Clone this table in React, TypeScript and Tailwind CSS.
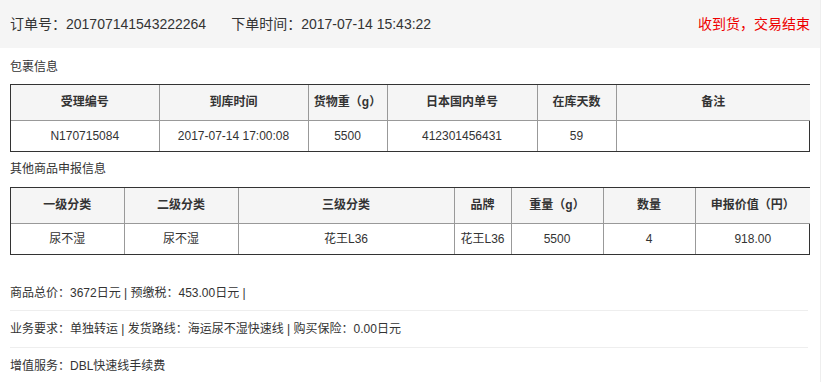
import React from 'react';

const font = { fontFamily: '"Liberation Sans", "Noto Sans CJK SC", sans-serif' };

type Col = { label: string; width: number };

const parcelCols: Col[] = [
  { label: '受理编号', width: 148 },
  { label: '到库时间', width: 149 },
  { label: '货物重（g）', width: 79 },
  { label: '日本国内单号', width: 150 },
  { label: '在库天数', width: 79 },
  { label: '备注', width: 194 },
];

const parcelRow = ['N170715084', '2017-07-14 17:00:08', '5500', '412301456431', '59', ''];

const goodsCols: Col[] = [
  { label: '一级分类', width: 113 },
  { label: '二级分类', width: 114 },
  { label: '三级分类', width: 216 },
  { label: '品牌', width: 57 },
  { label: '重量（g）', width: 92 },
  { label: '数量', width: 92 },
  { label: '申报价值（円）', width: 115 },
];

const goodsRow = ['尿不湿', '尿不湿', '花王L36', '花王L36', '5500', '4', '918.00'];

function InfoTable({ cols, row }: { cols: Col[]; row: string[] }) {
  return (
    <div className="w-[800px] border border-[#333]">
      <table className="w-full table-fixed border-collapse border-hidden text-[12px] text-[#333]">
        <colgroup>
          {cols.map((c) => (
            <col key={c.label} style={{ width: c.width }} />
          ))}
        </colgroup>
        <thead>
          <tr className="h-[35px] bg-[#f5f5f5]">
            {cols.map((c) => (
              <th key={c.label} className="border border-[#999] font-bold text-center px-1 whitespace-nowrap">
                {c.label}
              </th>
            ))}
          </tr>
        </thead>
        <tbody>
          <tr className="h-[31px]">
            {row.map((v, i) => (
              <td key={i} className="border border-[#999] text-center px-1 whitespace-nowrap">
                {v}
              </td>
            ))}
          </tr>
        </tbody>
      </table>
    </div>
  );
}

export default function App() {
  return (
    <div className="w-[831px] h-[382px] bg-white overflow-hidden flex" style={font}>
      <div className="w-[821px] border-r border-[#eee] flex flex-col shrink-0">
        {/* Header */}
        <div className="h-[48px] shrink-0 bg-[#f5f5f5] flex items-center justify-between pl-[10px] pr-[10px] text-[14px] text-[#333]">
          <div className="flex">
            <span>订单号：201707141543222264</span>
            <span className="ml-[25px]">下单时间：2017-07-14 15:43:22</span>
          </div>
          <span className="text-[#e00]">收到货，交易结束</span>
        </div>

        <div className="px-[10px]">
          <div className="h-[36px] pt-[11px] text-[12px] leading-[16px] text-[#333]">包裹信息</div>
          <InfoTable cols={parcelCols} row={parcelRow} />

          <div className="h-[35px] pt-[9px] text-[12px] leading-[16px] text-[#333]">其他商品申报信息</div>
          <InfoTable cols={goodsCols} row={goodsRow} />

          {/* Summary */}
          <div className="mt-[20px] w-[798px] text-[12px] text-[#333]">
            <div className="h-[36px] flex items-center border-b border-[#eee]">
              商品总价：3672日元 | 预缴税：453.00日元 |
            </div>
            <div className="h-[37px] flex items-center border-b border-[#eee]">
              业务要求：单独转运 | 发货路线：海运尿不湿快速线 | 购买保险：0.00日元
            </div>
            <div className="h-[36px] flex items-center">增值服务：DBL快速线手续费</div>
          </div>
        </div>
      </div>
    </div>
  );
}
